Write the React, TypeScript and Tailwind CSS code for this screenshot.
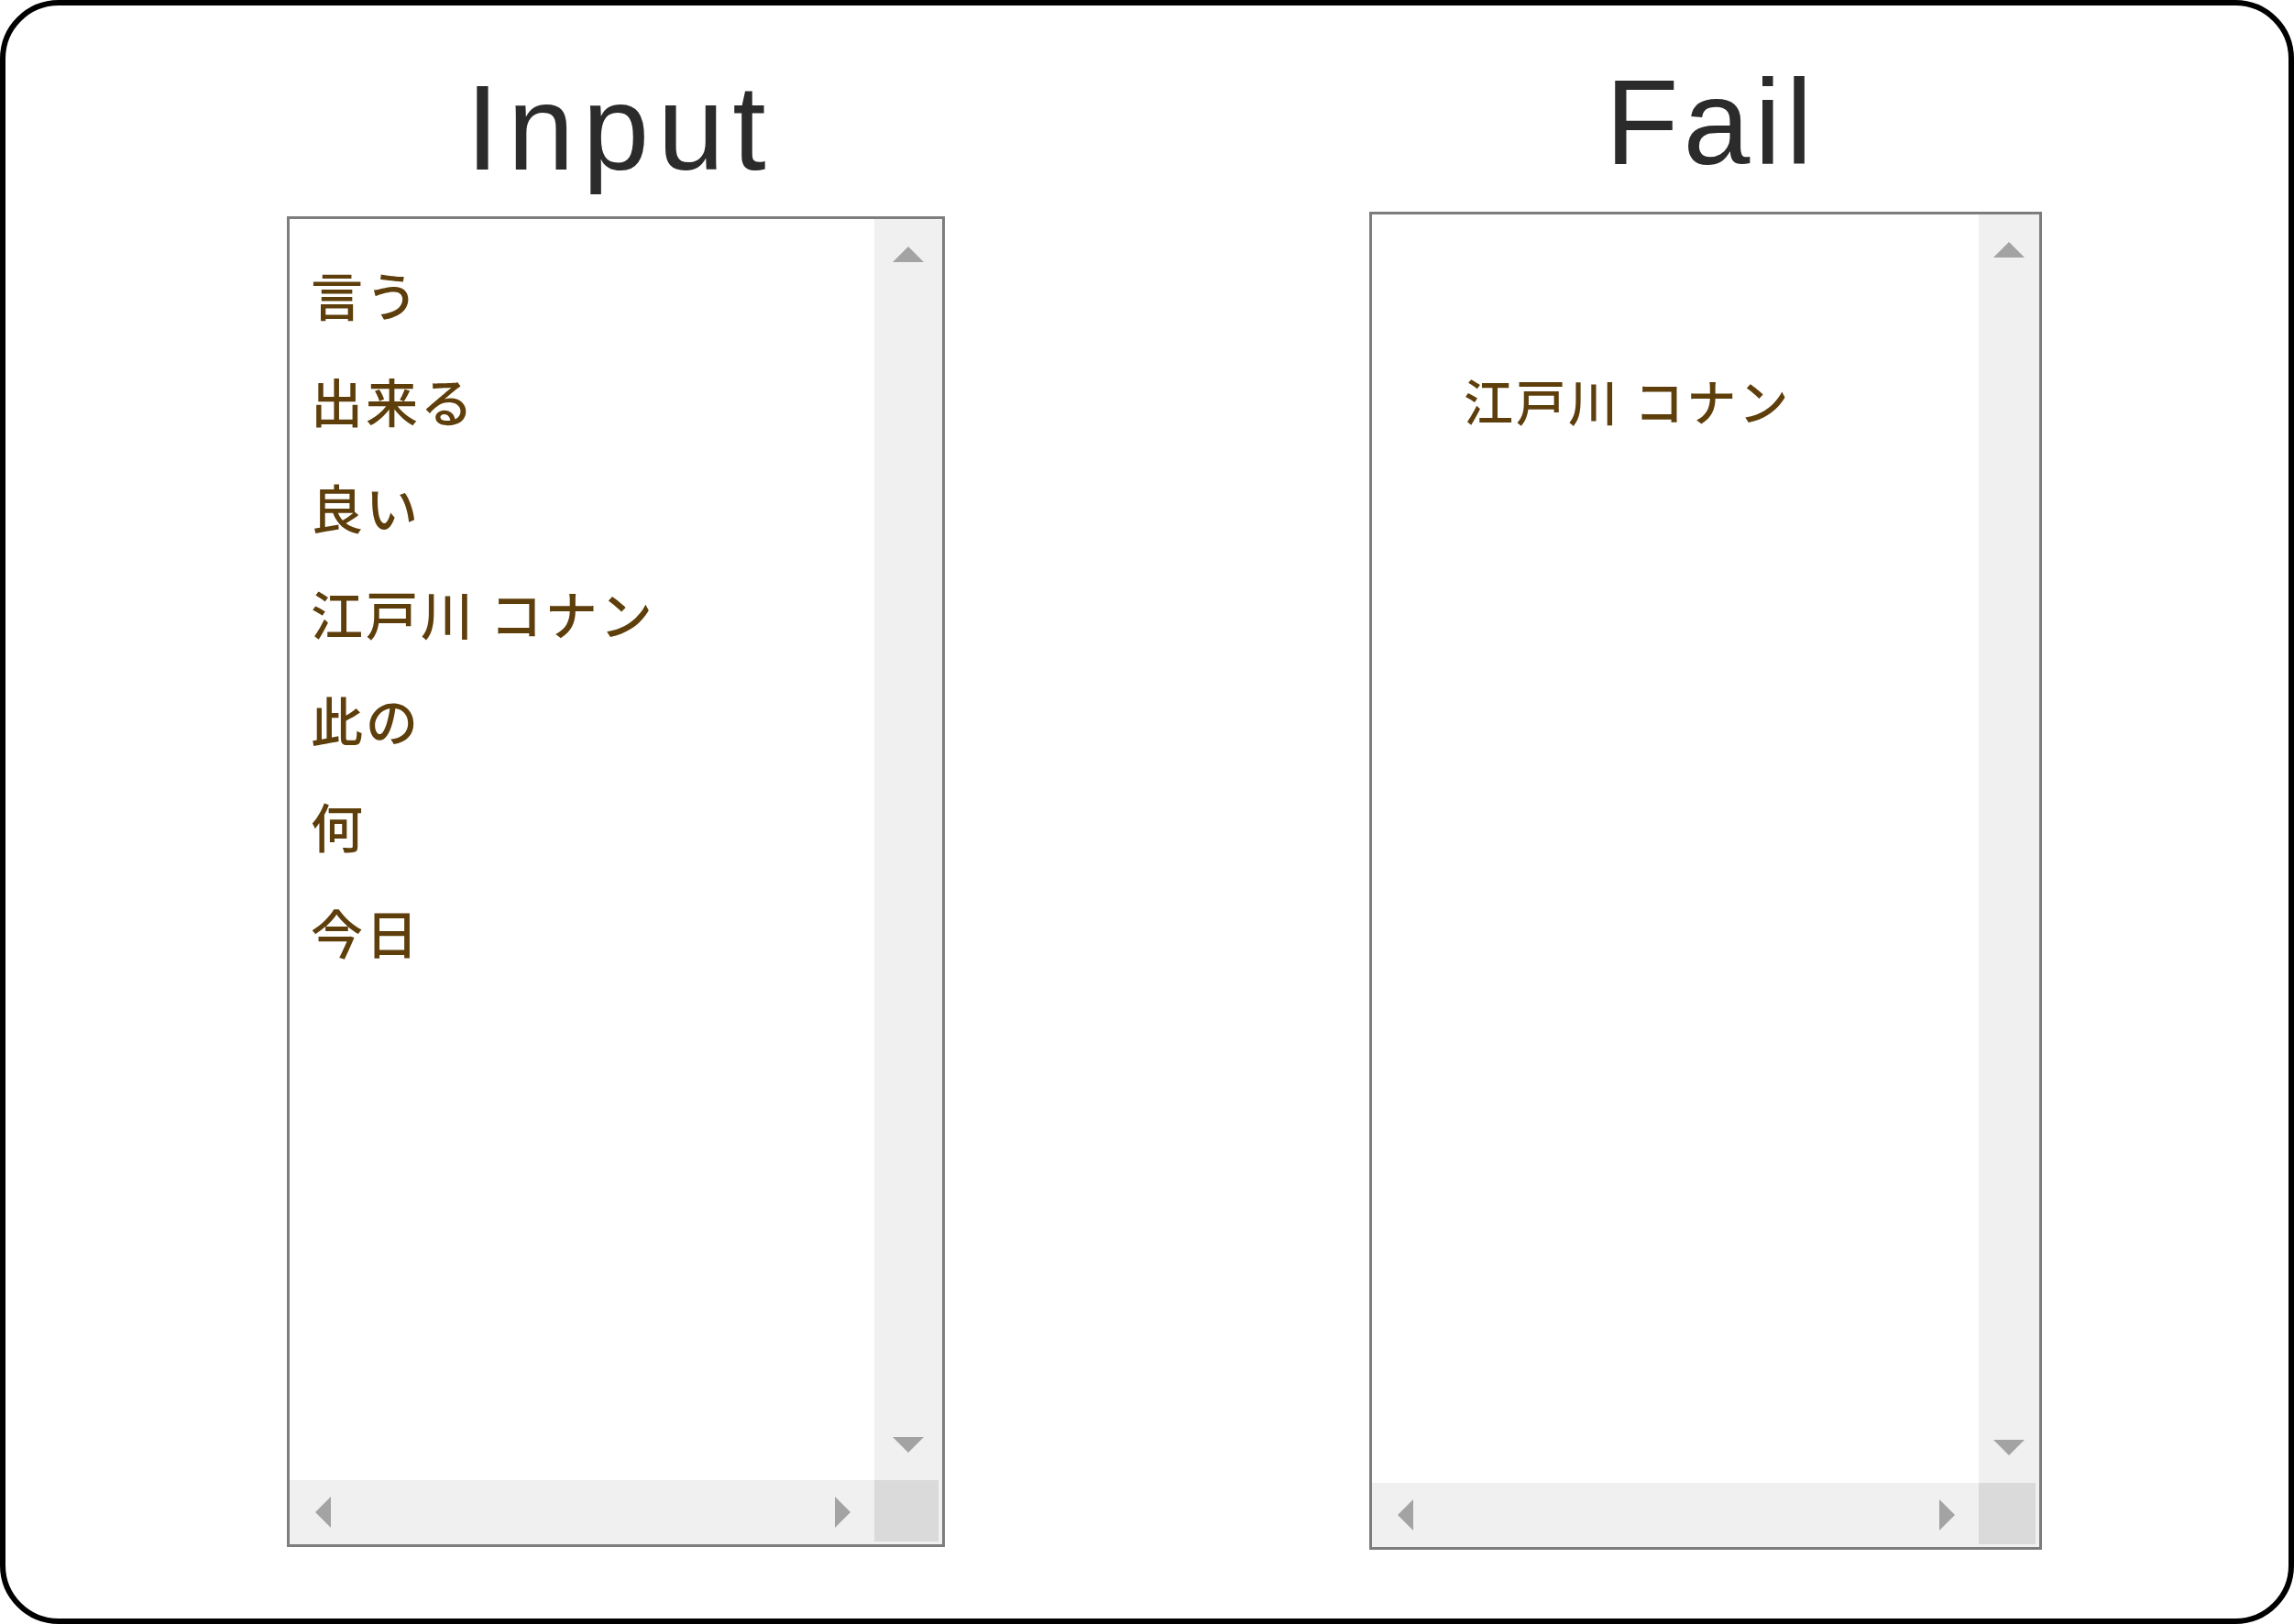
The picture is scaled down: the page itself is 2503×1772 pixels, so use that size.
import React from "react";

const Up = () => (
  <svg className="shrink-0" width="36" height="20" viewBox="0 0 36 20"><polygon points="18,2 35,19 1,19" fill="#a3a3a3" /></svg>
);
const Down = () => (
  <svg className="shrink-0" width="36" height="20" viewBox="0 0 36 20"><polygon points="1,1 35,1 18,18" fill="#a3a3a3" /></svg>
);
const Left = () => (
  <svg className="shrink-0" width="20" height="36" viewBox="0 0 20 36"><polygon points="19,1 19,35 2,18" fill="#a3a3a3" /></svg>
);
const Right = () => (
  <svg className="shrink-0" width="20" height="36" viewBox="0 0 20 36"><polygon points="1,1 18,18 1,35" fill="#a3a3a3" /></svg>
);

const jp = { fontFamily: '"Noto Sans CJK JP", "Noto Sans", sans-serif' };

function ListBox({
  items,
  heightClass,
  vbarClass,
  padClass,
  textClass,
}: {
  items: string[];
  heightClass: string;
  vbarClass: string;
  padClass: string;
  textClass: string;
}) {
  return (
    <div className={`flex flex-col border-[3px] border-[#7d7d7d] bg-white ${heightClass}`}>
      <div className="flex flex-1 min-h-0">
        <div className={`flex-1 flex flex-col ${padClass}`} style={jp}>
          {items.map((t) => (
            <div
              key={t}
              className={`h-[116px] flex items-center text-[#5e3f0c] font-medium tracking-[3px] whitespace-pre ${textClass}`}
            >
              {t}
            </div>
          ))}
        </div>
        <div className={`${vbarClass} bg-[#f0f0f0] flex flex-col justify-between items-center pt-[28px] pb-[28px]`}>
          <Up />
          <Down />
        </div>
      </div>
      <div className="h-[70px] flex">
        <div className="flex-1 bg-[#f0f0f0] flex items-center justify-between pl-[26px] pr-[24px]">
          <Left />
          <Right />
        </div>
        <div className={`${vbarClass} bg-[#dadada] border-r-[4px] border-b-[3px] border-[#f0f0f0]`} />
      </div>
    </div>
  );
}

export default function App() {
  return (
    <div className="w-[2503px] h-[1772px] bg-white">
      <div className="w-full h-full border-[6px] border-black rounded-[64px] flex pl-[307px]">
        <div className="w-[718px] flex flex-col items-center pt-[68px] gap-[31px]">
          <div
            className="text-[131px] leading-[131px] text-[#2b2b2b] tracking-[9px] pl-[9px]"
            style={{ fontFamily: '"Liberation Sans", Arial, sans-serif' }}
          >
            Input
          </div>
          <div className="w-full">
            <ListBox
              items={["言う", "出来る", "良い", "江戸川 コナン", "此の", "何", "今日"]}
              heightClass="h-[1452px]"
              vbarClass="w-[74px]"
              padClass="pt-[24px] pl-[23px]"
              textClass="text-[57px]"
            />
          </div>
        </div>
        <div className="w-[463px]" />
        <div className="w-[734px] flex flex-col items-center pt-[62px] gap-[32px]">
          <div
            className="text-[131px] leading-[131px] text-[#2b2b2b] tracking-[5px] pl-[12px]"
            style={{ fontFamily: '"Liberation Sans", Arial, sans-serif' }}
          >
            Fail
          </div>
          <div className="w-full">
            <ListBox
              items={["江戸川 コナン"]}
              heightClass="h-[1460px]"
              vbarClass="w-[66px]"
              padClass="pt-[144px] pl-[100px]"
              textClass="text-[54px]"
            />
          </div>
        </div>
      </div>
    </div>
  );
}
